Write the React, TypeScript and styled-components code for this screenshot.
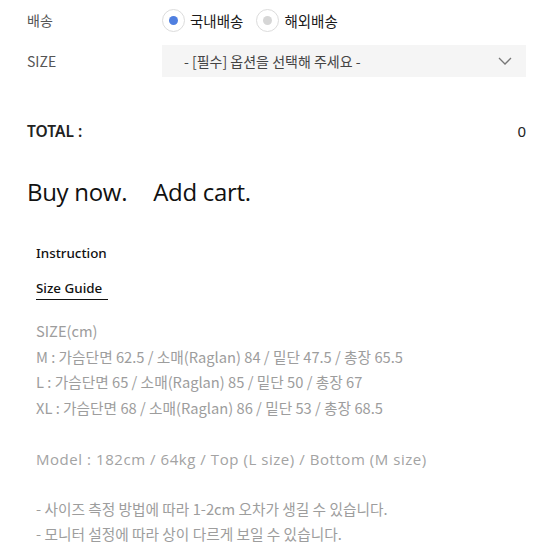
import React from "react";
import styled, { createGlobalStyle } from "styled-components";

const Global = createGlobalStyle`
  html, body { margin: 0; padding: 0; background: #fff; }
  body { font-family: "Noto Sans CJK KR", "Noto Sans", sans-serif; color: #222; }
`;

const Page = styled.div`
  width: 553px;
  height: 553px;
  overflow: hidden;
  padding: 0 27px 0 27px;
  box-sizing: border-box;
`;

const OptionRow = styled.div<{ $h: number }>`
  display: flex;
  align-items: center;
  height: ${(p) => p.$h}px;
`;

const Label = styled.div`
  width: 135px;
  font-size: 14px;
  color: #555;
`;

const RadioGroup = styled.div`
  display: flex;
  align-items: center;
  gap: 13px;
`;

const RadioItem = styled.label`
  display: flex;
  align-items: center;
  gap: 5px;
  font-size: 14.5px;
  font-weight: 400;
  color: #1a1a1a;
`;

const RadioCircle = styled.span<{ $on?: boolean }>`
  width: 23px;
  height: 23px;
  border-radius: 50%;
  border: 1px solid #dcdcdc;
  box-sizing: border-box;
  display: flex;
  align-items: center;
  justify-content: center;
  background: #fff;
  &::after {
    content: "";
    width: 9px;
    height: 9px;
    border-radius: 50%;
    background: ${(p) => (p.$on ? "#4f7fe0" : "#d6d6d6")};
  }
`;

const Select = styled.div`
  flex: 1;
  height: 32px;
  background: #f5f5f5;
  display: flex;
  align-items: center;
  justify-content: space-between;
  padding: 0 14px 0 22px;
  font-size: 14px;
  color: #444;
`;

const TotalRow = styled.div`
  display: flex;
  justify-content: space-between;
  align-items: center;
  margin-top: 38px;
  height: 22px;
`;

const TotalLabel = styled.div`
  font-size: 15.5px;
  font-weight: 600;
  color: #222;
  font-family: "Noto Sans", sans-serif;
`;

const TotalValue = styled.div`
  font-size: 15px;
  color: #222;
  font-family: "Noto Sans", sans-serif;
`;

const Buttons = styled.div`
  display: flex;
  gap: 26px;
  margin-top: 33px;
`;

const BigBtn = styled.div`
  font-family: "Open Sans", sans-serif;
  font-size: 24px;
  color: #111;
  letter-spacing: -0.3px;
`;

const Tabs = styled.div`
  display: flex;
  flex-direction: column;
  align-items: flex-start;
  margin: 36px 0 0 9px;
  gap: 15px;
`;

const Tab = styled.div<{ $active?: boolean }>`
  font-family: "Noto Sans", sans-serif;
  font-size: 13.4px;
  font-weight: 500;
  color: #111;
  padding: 0 ${(p) => (p.$active ? "6px" : "0")} 2px 0;
  border-bottom: ${(p) => (p.$active ? "1.5px solid #111" : "none")};
`;

const Info = styled.div`
  margin: 18px 0 0 9px;
  font-size: 14.7px;
  font-weight: 400;
  color: #9d9d9d;
  line-height: 25.5px;
`;

const ModelLine = styled.div`
  font-family: "Open Sans", "Noto Sans CJK KR", sans-serif;
  font-size: 15px;
  font-weight: 400;
  color: #a3a3a3;
  letter-spacing: 0.55px;
`;

const Gap = styled.div<{ $h: number }>`
  height: ${(p) => p.$h}px;
`;

export default function App() {
  return (
    <>
      <Global />
      <Page>
        <OptionRow $h={40}>
          <Label>배송</Label>
          <RadioGroup>
            <RadioItem>
              <RadioCircle $on />
              국내배송
            </RadioItem>
            <RadioItem>
              <RadioCircle />
              해외배송
            </RadioItem>
          </RadioGroup>
        </OptionRow>
        <OptionRow $h={42}>
          <Label>SIZE</Label>
          <Select>
            <span>- [필수] 옵션을 선택해 주세요 -</span>
            <svg width="14" height="9" viewBox="0 0 14 9">
              <path d="M1 1l6 6 6-6" fill="none" stroke="#777" strokeWidth="1.3" />
            </svg>
          </Select>
        </OptionRow>
        <TotalRow>
          <TotalLabel>TOTAL :</TotalLabel>
          <TotalValue>0</TotalValue>
        </TotalRow>
        <Buttons>
          <BigBtn>Buy now.</BigBtn>
          <BigBtn>Add cart.</BigBtn>
        </Buttons>
        <Tabs>
          <Tab>Instruction</Tab>
          <Tab $active>Size Guide</Tab>
        </Tabs>
        <Info>
          <div>SIZE(cm)</div>
          <div>M : 가슴단면 62.5 / 소매(Raglan) 84 / 밑단 47.5 / 총장 65.5</div>
          <div>L : 가슴단면 65 / 소매(Raglan) 85 / 밑단 50 / 총장 67</div>
          <div>XL : 가슴단면 68 / 소매(Raglan) 86 / 밑단 53 / 총장 68.5</div>
          <Gap $h={27} />
          <ModelLine>Model : 182cm / 64kg / Top (L size) / Bottom (M size)</ModelLine>
          <Gap $h={23} />
          <div>- 사이즈 측정 방법에 따라 1-2cm 오차가 생길 수 있습니다.</div>
          <div>- 모니터 설정에 따라 상이 다르게 보일 수 있습니다.</div>
          <div>- 원단 특성상 세탁 시 약간의 수축이 발생할 수 있으니 참고해주세요.</div>
        </Info>
      </Page>
    </>
  );
}
